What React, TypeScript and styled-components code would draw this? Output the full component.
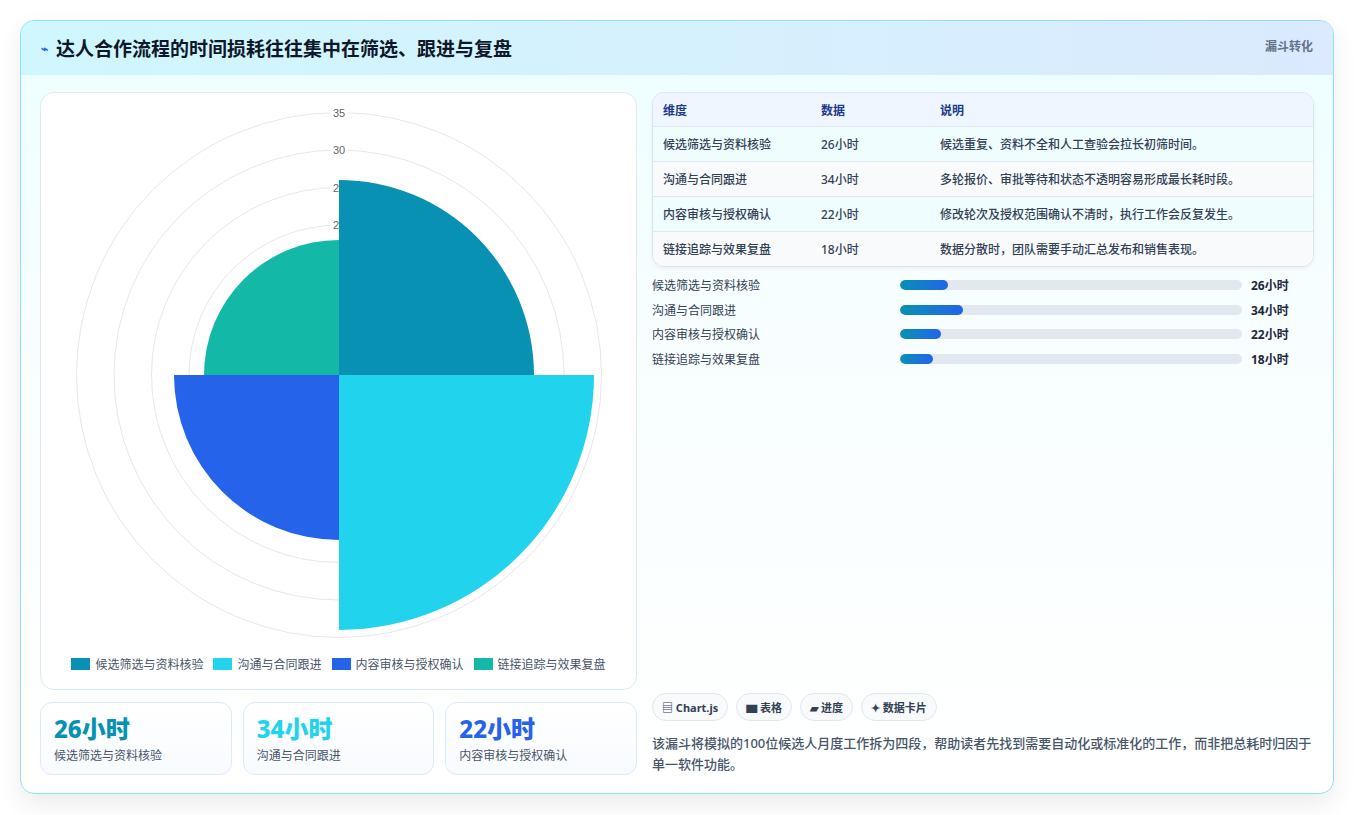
import React from "react";
import styled, { createGlobalStyle } from "styled-components";

const Global = createGlobalStyle`
  html,body{margin:0;background:#fff;font-family:"Noto Sans","Noto Sans CJK SC",sans-serif;}
  *{box-sizing:border-box;}
`;
const Page = styled.div`padding:20px 20px 21px 20px;height:815px;`;
const Card = styled.div`
  width:1314px;height:774px;border:1px solid #8ee3ef;border-radius:14px;overflow:hidden;
  background:linear-gradient(180deg,#ecfeff 0%,#f8feff 40%,#fff 100%);
  box-shadow:0 10px 24px rgba(0,0,0,.08);display:flex;flex-direction:column;
`;
const Header = styled.div`
  height:55px;display:flex;align-items:center;justify-content:space-between;padding:0 20px;
  background:linear-gradient(90deg,#cff7fd,#dbeafe);
`;
const Title = styled.h1`margin:0;font-size:19px;font-weight:700;color:#0f172a;display:flex;align-items:center;gap:8px;`;
const Bolt = styled.span`color:#2563eb;font-size:12px;`;
const Tag = styled.span`font-size:12px;color:#64748b;font-weight:700;align-self:flex-start;margin-top:16px;`;
const Body = styled.div`flex:1;display:grid;grid-template-columns:597px 662px;gap:15px;padding:17px 19px 18px 19px;`;
const Col = styled.div`display:flex;flex-direction:column;`;
const ChartCard = styled.div`
  height:598px;background:#fff;border:1px solid #e2e8f0;border-radius:14px;display:flex;flex-direction:column;align-items:center;
`;
const Legend = styled.div`display:flex;gap:10px;font-size:12px;color:#475569;margin-top:6px;`;
const LItem = styled.span`display:flex;align-items:center;gap:5px;`;
const Sw = styled.i<{c:string}>`width:19px;height:12px;background:${p=>p.c};display:inline-block;`;
const Stats = styled.div`display:grid;grid-template-columns:repeat(3,1fr);gap:11px;margin-top:12px;`;
const Stat = styled.div`height:73px;border:1px solid #dbeafe;border-radius:12px;background:linear-gradient(180deg,#fff,#f8fbff);padding:9px 13px;`;
const Big = styled.div<{c:string}>`font-size:24px;font-weight:800;color:${p=>p.c};line-height:34px;`;
const Small = styled.div`font-size:12px;color:#475569;`;
const Table = styled.div`border:1px solid #dbe3ee;border-radius:12px;overflow:hidden;background:#fff;box-shadow:0 2px 4px rgba(0,0,0,.05);`;
const Row = styled.div<{h?:boolean;alt?:boolean}>`
  display:grid;grid-template-columns:158px 119px 1fr;height:${p=>p.h?33:35}px;align-items:center;padding:0 10px;
  font-size:12px;color:${p=>p.h?"#1e3a8a":"#334155"};font-weight:${p=>p.h?700:500};
  background:${p=>p.h?"#eff6ff":p.alt?"#f8fafc":"#f0fdff"};border-top:${p=>p.h?"none":"1px solid #e2e8f0"};
`;
const Bars = styled.div`display:flex;flex-direction:column;gap:6px;margin-top:9px;`;
const BarRow = styled.div`display:grid;grid-template-columns:248px 342px 1fr;align-items:center;height:18.5px;font-size:12px;color:#334155;`;
const Track = styled.div`height:10px;border-radius:5px;background:#e2e8f0;overflow:hidden;`;
const Fill = styled.div`height:100%;border-radius:5px;background:linear-gradient(90deg,#0891b2,#2563eb);`;
const Val = styled.b`padding-left:9px;color:#1e293b;`;
const Spacer = styled.div`flex:1;`;
const Chips = styled.div`display:flex;gap:8px;`;
const Chip = styled.span`font-size:11px;font-weight:700;color:#334155;border:1px solid #e2e8f0;border-radius:14px;padding:5px 9px;background:#f8fafc;`;
const Note = styled.p`margin:12px 0 0;font-size:13px;line-height:21px;color:#475569;font-weight:500;`;

const data = [
  {n:"候选筛选与资料核验",v:26,c:"#0891b2",d:"候选重复、资料不全和人工查验会拉长初筛时间。"},
  {n:"沟通与合同跟进",v:34,c:"#22d3ee",d:"多轮报价、审批等待和状态不透明容易形成最长耗时段。"},
  {n:"内容审核与授权确认",v:22,c:"#2563eb",d:"修改轮次及授权范围确认不清时，执行工作会反复发生。"},
  {n:"链接追踪与效果复盘",v:18,c:"#14b8a6",d:"数据分散时，团队需要手动汇总发布和销售表现。"},
];

function Polar(){
  const cx=298,cy=282,k=7.5;
  const arc=(r:number,a0:number,a1:number)=>{
    const p=(a:number)=>[cx+r*Math.cos(a),cy+r*Math.sin(a)];
    const [x0,y0]=p(a0),[x1,y1]=p(a1);
    return `M${cx} ${cy}L${x0} ${y0}A${r} ${r} 0 0 1 ${x1} ${y1}Z`;
  };
  return (
    <svg width="595" height="556" viewBox="0 0 595 556">
      {[5,10,15,20,25,30,35].map(t=>(<circle key={t} cx={cx} cy={cy} r={t*k} fill="none" stroke="#e5e7eb"/>))}
      {[5,10,15,20,25,30,35].map(t=>(<g key={t}><rect x={cx-9} y={cy-t*k-7} width="18" height="14" fill="#fff"/><text x={cx} y={cy-t*k+4} fontSize="11" textAnchor="middle" fill="#666" fontFamily="Liberation Sans,sans-serif">{t}</text></g>))}
      {data.map((d,i)=>{const a0=-Math.PI/2+i*Math.PI/2;return <path key={i} d={arc(d.v*k,a0,a0+Math.PI/2)} fill={d.c}/>;})}
    </svg>
  );
}

export default function App(){
  return (<Page><Global/><Card>
    <Header><Title><Bolt>⌁</Bolt>达人合作流程的时间损耗往往集中在筛选、跟进与复盘</Title><Tag>漏斗转化</Tag></Header>
    <Body>
      <Col>
        <ChartCard><Polar/>
          <Legend>{data.map(d=><LItem key={d.n}><Sw c={d.c}/>{d.n}</LItem>)}</Legend>
        </ChartCard>
        <Stats>{data.slice(0,3).map(d=><Stat key={d.n}><Big c={d.c}>{d.v}小时</Big><Small>{d.n}</Small></Stat>)}</Stats>
      </Col>
      <Col>
        <Table>
          <Row h><span>维度</span><span>数据</span><span>说明</span></Row>
          {data.map((d,i)=><Row key={d.n} alt={i%2===1}><span>{d.n}</span><span>{d.v}小时</span><span>{d.d}</span></Row>)}
        </Table>
        <Bars>{data.map(d=><BarRow key={d.n}><span>{d.n}</span><Track><Fill style={{width:`${d.v/185*100}%`}}/></Track><Val>{d.v}小时</Val></BarRow>)}</Bars>
        <Spacer/>
        <Chips><Chip>▤ Chart.js</Chip><Chip>▆ 表格</Chip><Chip>▰ 进度</Chip><Chip>✦ 数据卡片</Chip></Chips>
        <Note>该漏斗将模拟的100位候选人月度工作拆为四段，帮助读者先找到需要自动化或标准化的工作，而非把总耗时归因于单一软件功能。</Note>
      </Col>
    </Body>
  </Card></Page>);
}
